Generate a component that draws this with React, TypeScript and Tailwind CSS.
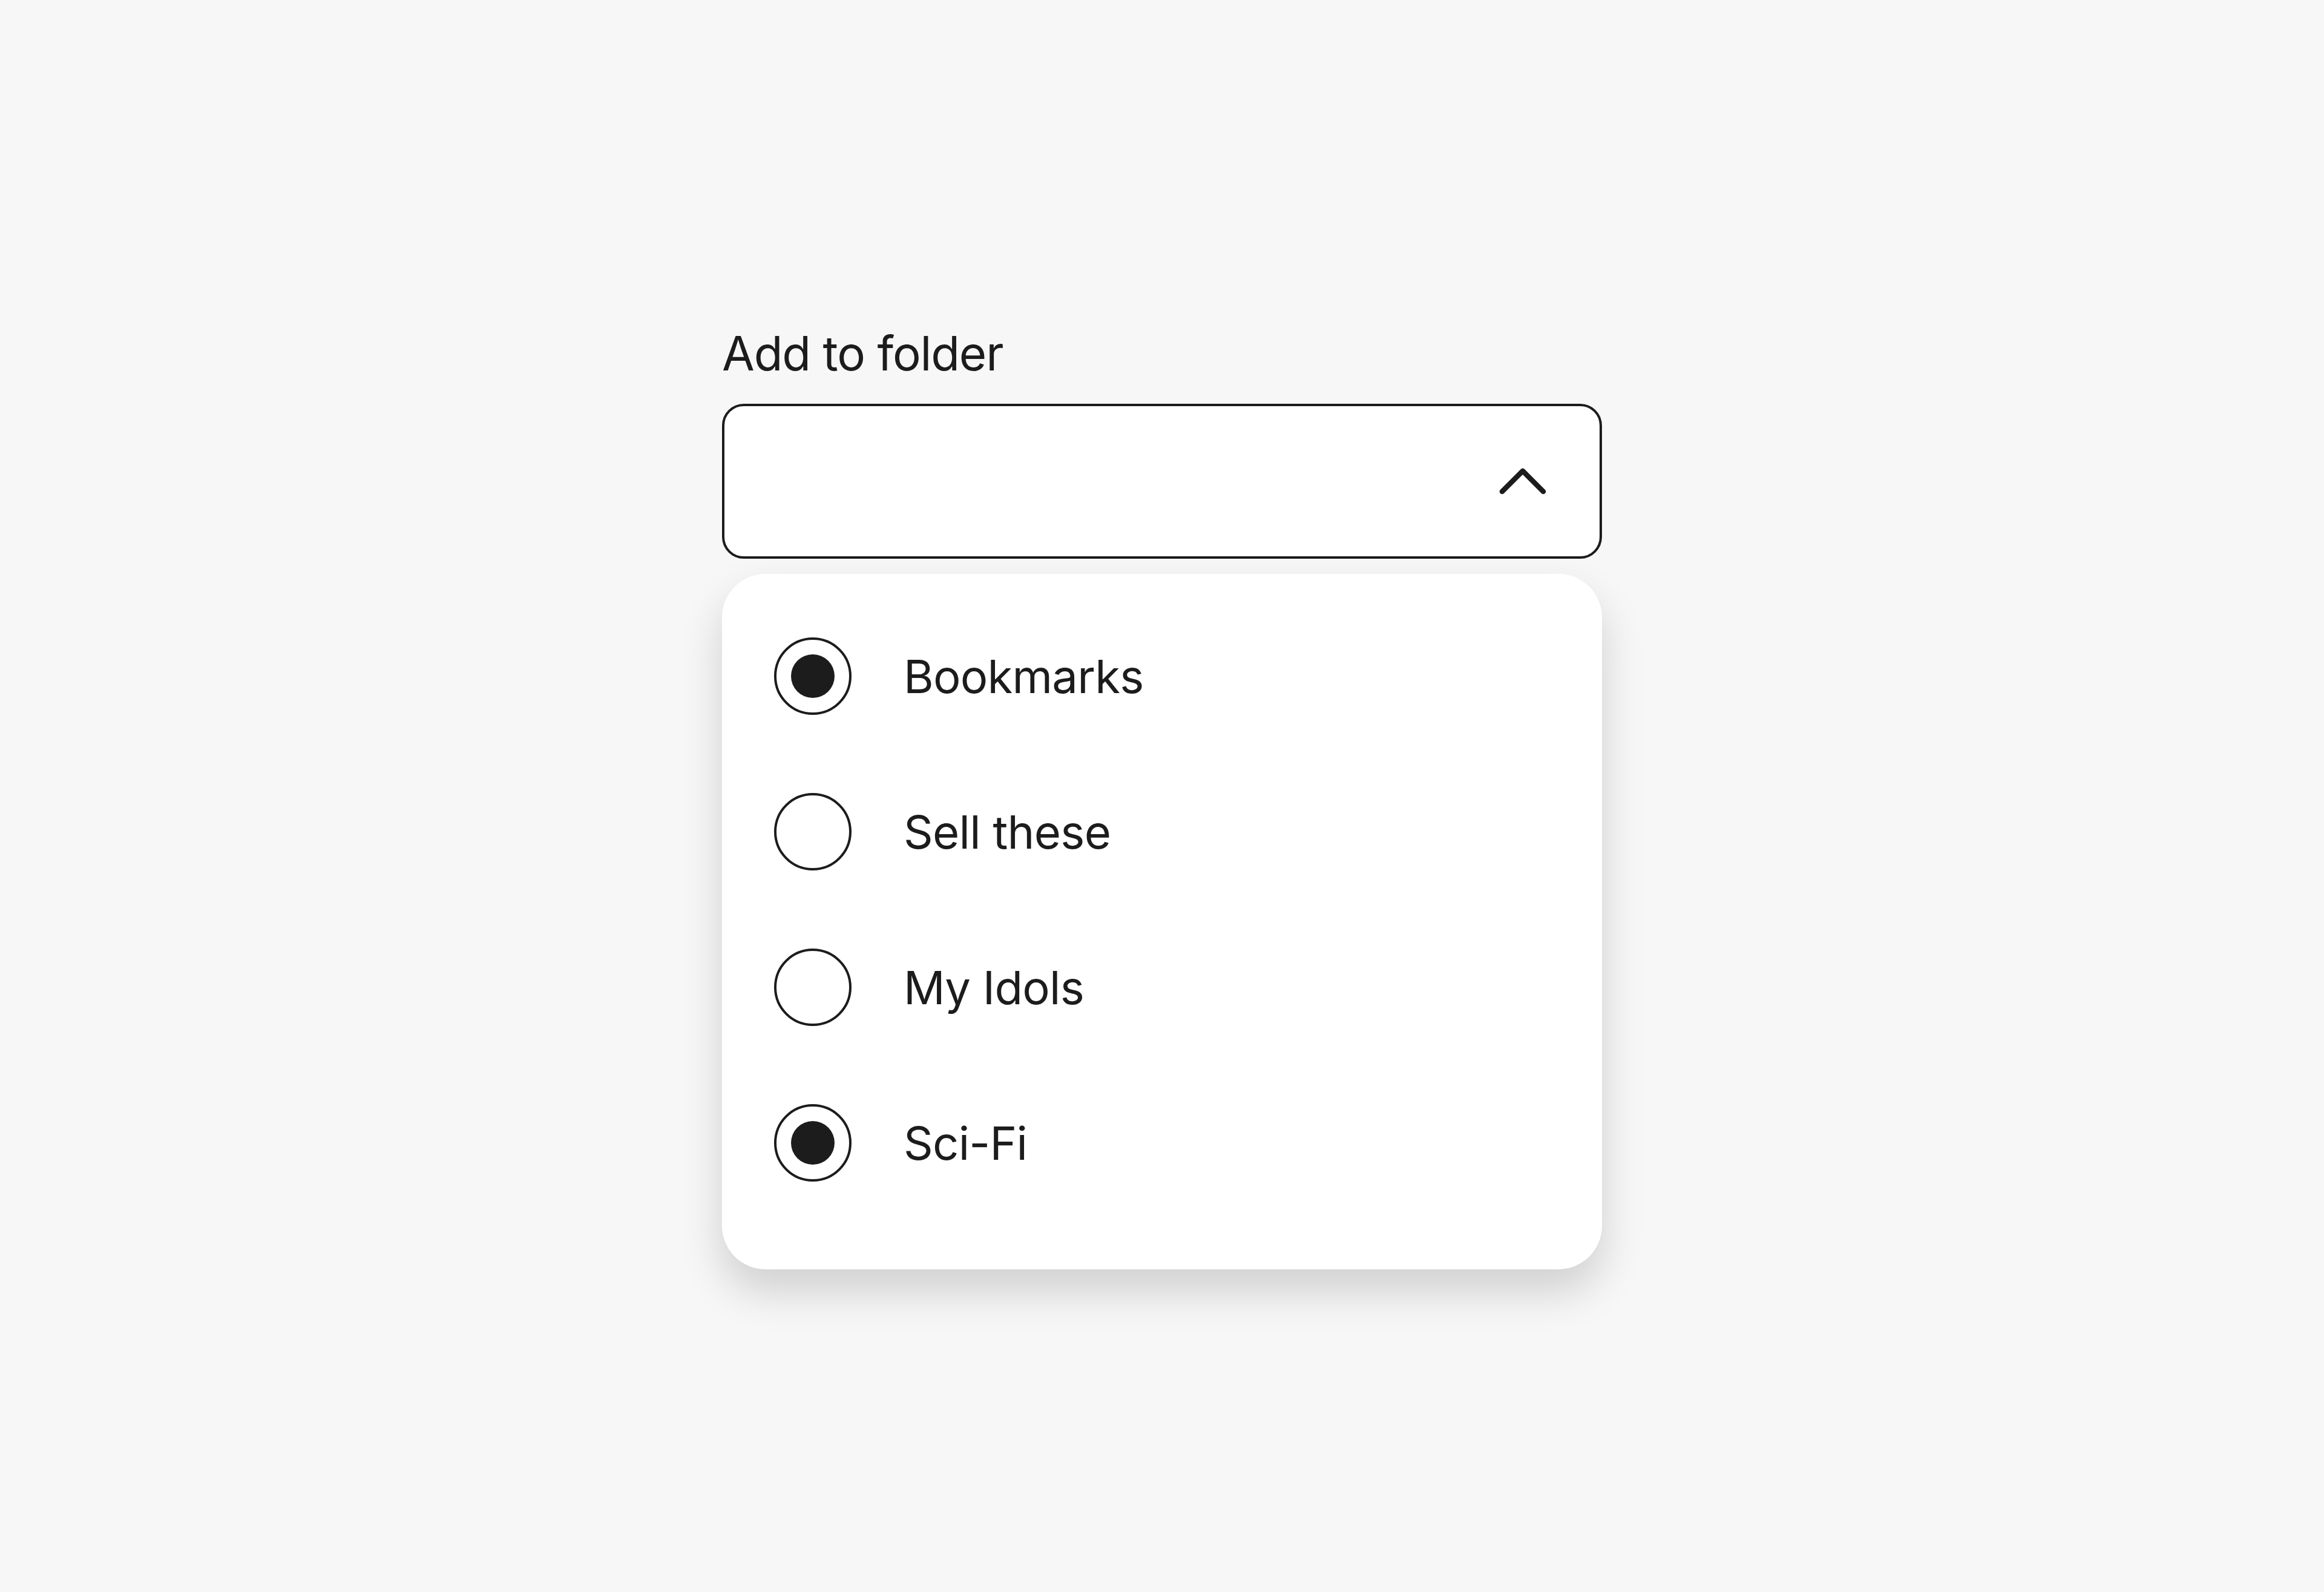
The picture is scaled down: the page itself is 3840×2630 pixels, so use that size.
import React from "react";

const options = [
  { label: "Bookmarks", checked: true },
  { label: "Sell these", checked: false },
  { label: "My Idols", checked: false },
  { label: "Sci-Fi", checked: true },
];

function Radio({ checked }: { checked: boolean }) {
  return (
    <span className="flex h-[128px] w-[128px] shrink-0 items-center justify-center rounded-full border-[4px] border-[#1c1c1c] bg-white">
      {checked && <span className="block h-[72px] w-[72px] rounded-full bg-[#1c1c1c]" />}
    </span>
  );
}

export default function App() {
  return (
    <div
      className="flex min-h-screen w-full justify-center bg-[#f7f7f7] pt-[545px] text-[#1c1c1c]"
      style={{ fontFamily: 'Inter, "Liberation Sans", Arial, sans-serif' }}
    >
      <div className="flex w-[1454px] flex-col">
        <label className="text-[78px] leading-none tracking-[-0.015em]">Add to folder</label>
        <div className="mt-[44px] flex h-[256px] w-full items-center justify-end rounded-[36px] border-[4px] border-[#1c1c1c] bg-white pr-[88px]">
          <svg width="78" height="44" viewBox="0 0 78 44" fill="none">
            <path d="M5 39 L39 5 L73 39" stroke="#1c1c1c" strokeWidth="8.5" strokeLinecap="round" strokeLinejoin="round" />
          </svg>
        </div>
        <div className="mt-[25px] flex w-full flex-col rounded-[72px] bg-white pb-[81px] pl-[86px] pt-[40px] shadow-[0_36px_70px_rgba(0,0,0,0.16)]">
          {options.map((o) => (
            <div key={o.label} className="flex h-[257px] items-center gap-[86px]">
              <Radio checked={o.checked} />
              <span className="text-[76px] leading-none tracking-[-0.01em]">{o.label}</span>
            </div>
          ))}
        </div>
      </div>
    </div>
  );
}
